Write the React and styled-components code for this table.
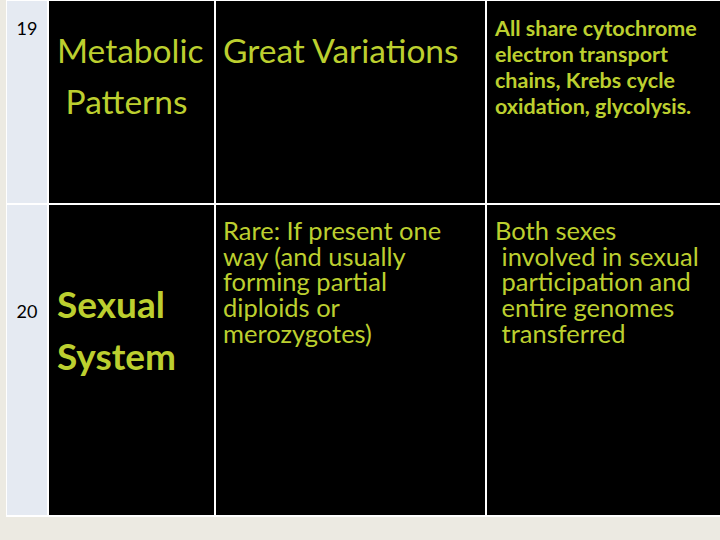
import React from 'react'
import styled, { createGlobalStyle } from 'styled-components'

const GlobalStyle = createGlobalStyle`
   html, body {
      margin: 0;
      padding: 0;
      background: #eceae2;
   }
`

const Page = styled('div')({
   width: '720px',
   height: '540px',
   paddingLeft: '6px',
   boxSizing: 'border-box',
   overflow: 'hidden',
})

const Table = styled('div')({
   display: 'grid',
   gridTemplateColumns: '40px 165px 269px 1fr',
   gridTemplateRows: '202px 310px',
   gap: '2px',
   width: '714px',
   padding: '1px 0 2px 1px',
   boxSizing: 'border-box',
   background: '#ffffff',
})

const NumberCell = styled('div')(({ $top }) => ({
   background: '#e5eaf2',
   color: '#000000',
   fontFamily: 'Lato, "Liberation Sans", sans-serif',
   fontSize: '18px',
   lineHeight: '20px',
   textAlign: 'center',
   paddingTop: $top,
   boxSizing: 'border-box',
}))

const Cell = styled('div')(({ $top, $left, $size, $bold, $lh }) => ({
   background: '#000000',
   color: '#bccf2f',
   fontFamily: 'Lato, "Liberation Sans", sans-serif',
   fontSize: $size,
   fontWeight: $bold ? 700 : 400,
   lineHeight: $lh,
   paddingTop: $top,
   paddingLeft: $left,
   boxSizing: 'border-box',
   whiteSpace: 'pre',
   overflow: 'hidden',
}))

export default function App() {
   return (
      <Page>
         <GlobalStyle />
         <Table>
            <NumberCell $top="17px">19</NumberCell>
            <Cell $top="24px" $left="8px" $size="33.5px" $lh="51px">
               {'Metabolic\n Patterns'}
            </Cell>
            <Cell $top="24px" $left="7px" $size="33.5px" $lh="51px">
               Great Variations
            </Cell>
            <Cell $top="14px" $left="8px" $size="21.5px" $lh="26px" $bold>
               {'All share cytochrome\nelectron transport\nchains, Krebs cycle\noxidation, glycolysis.'}
            </Cell>

            <NumberCell $top="96px">20</NumberCell>
            <Cell $top="73px" $left="8px" $size="37px" $lh="52px" $bold>
               {'Sexual\nSystem'}
            </Cell>
            <Cell $top="13px" $left="7px" $size="25.5px" $lh="25.7px">
               {'Rare: If present one\nway (and usually\nforming partial\ndiploids or\nmerozygotes)'}
            </Cell>
            <Cell $top="13px" $left="8px" $size="25.5px" $lh="25.7px">
               {'Both sexes\n involved in sexual\n participation and\n entire genomes\n transferred'}
            </Cell>
         </Table>
      </Page>
   )
}
